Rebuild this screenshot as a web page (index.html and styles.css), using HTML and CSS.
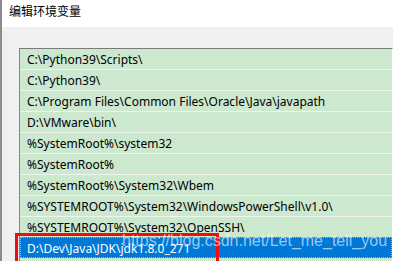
FILE: index.html
```html
<!DOCTYPE html>
<html lang="zh-CN">

<head>
    <meta charset="UTF-8">
    <meta name="viewport" content="width=device-width, initial-scale=1.0">
    <title>编辑环境变量</title>
    <link rel="stylesheet" href="styles.css">
</head>

<body>
    <div class="window">
        <!-- Title Bar -->
        <div class="title-bar">编辑环境变量</div>

        <!-- Path List -->
        <div class="content">
            <ul class="path-list">
                <li class="path-item">C:\Python39\Scripts\</li>
                <li class="path-item">C:\Python39\</li>
                <li class="path-item">C:\Program Files\Common Files\Oracle\Java\javapath</li>
                <li class="path-item">D:\VMware\bin\</li>
                <li class="path-item">%SystemRoot%\system32</li>
                <li class="path-item">%SystemRoot%</li>
                <li class="path-item">%SystemRoot%\System32\Wbem</li>
                <li class="path-item">%SYSTEMROOT%\System32\WindowsPowerShell\v1.0\</li>
                <li class="path-item">%SYSTEMROOT%\System32\OpenSSH\</li>
                <li class="path-item selected">
                    D:\Dev\Java\JDK\jdk1.8.0_271
                    <span class="highlight-box"></span>
                    <span class="watermark">https://blog.csdn.net/Let_me_tell_you</span>
                </li>
            </ul>
        </div>
    </div>
</body>

</html>
```

FILE: styles.css
```css
/* General Styles */
* {
    margin: 0;
    padding: 0;
    box-sizing: border-box;
}

body {
    font-family: "Noto Sans", "Liberation Sans", sans-serif;
    background-color: #f0f0f0;
    overflow: hidden;
}

/* Window */
.window {
    height: 261px;
    border-left: 2px solid #8c8c8c;
    display: flex;
    flex-direction: column;
}

/* Title Bar */
.title-bar {
    height: 27px;
    background-color: #ffffff;
    font-family: "Noto Sans CJK SC", sans-serif;
    font-size: 12px;
    line-height: 22px;
    padding-left: 7px;
    color: #000;
}

/* Content Area */
.content {
    flex: 1;
    padding: 21px 0 0 17px;
}

/* Path List */
.path-list {
    list-style-type: none;
    background-color: #cce8cf;
    border-top: 1px solid #7a7a7a;
    border-left: 1px solid #828790;
    border-right: 1px solid #ffffff;
    height: 100%;
}

.path-item {
    height: 21px;
    padding: 2px 0 0 7px;
    font-size: 12px;
    line-height: 18px;
    color: #000;
    border-bottom: 1px solid #edf5ee;
    white-space: nowrap;
}

/* Selected Row */
.path-item.selected {
    position: relative;
    height: 21px;
    margin-top: -1px;
    background-color: #0078d7;
    color: #ffffff;
    outline: 1px dotted #e9a43a;
    outline-offset: -1px;
    border-bottom: none;
    padding-top: 3px;
}

/* Red Annotation Box */
.highlight-box {
    position: absolute;
    top: -4px;
    left: -5px;
    width: 204px;
    height: 40px;
    border: 3px solid #f00d0d;
}

/* Watermark */
.watermark {
    position: absolute;
    top: -6px;
    left: 102px;
    font-family: "Liberation Sans", Arial, sans-serif;
    font-size: 16px;
    line-height: 20px;
    color: rgba(255, 255, 255, 0.6);
}
```
